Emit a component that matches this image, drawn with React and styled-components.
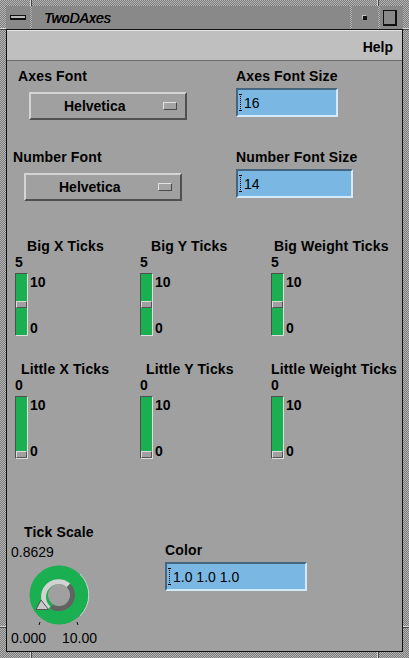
import React from 'react';
import styled, { createGlobalStyle } from 'styled-components';

const GlobalStyle = createGlobalStyle`
  html, body {
    margin: 0;
    padding: 0;
    background: #a0a0a0;
  }
  body {
    font-family: "Liberation Sans", Arial, Helvetica, sans-serif;
    color: #000;
  }
`;

const dither = 'repeating-conic-gradient(#7a7a7a 0% 25%, #b6b6b6 0% 50%) 0 0 / 2px 2px';

// resize-corner notches cut into the window frame
const notchV = (x, y) =>
    `linear-gradient(#d8d8d8, #d8d8d8) ${x}px ${y}px / 1px 6px no-repeat, linear-gradient(#444, #444) ${x + 1}px ${y}px / 1px 6px no-repeat`;
const notchH = (x, y) =>
    `linear-gradient(#d8d8d8, #d8d8d8) ${x}px ${y}px / 6px 1px no-repeat, linear-gradient(#444, #444) ${x}px ${y + 1}px / 6px 1px no-repeat`;

const Window = styled.div`
    width: 409px;
    height: 658px;
    box-sizing: border-box;
    padding: 6px;
    background:
        ${notchV(30, 0)},
        ${notchV(377, 0)},
        ${notchV(30, 652)},
        ${notchV(377, 652)},
        ${notchH(0, 28)},
        ${notchH(0, 626)},
        ${notchH(403, 28)},
        ${notchH(403, 626)},
        ${dither};
    display: flex;
    flex-direction: column;
`;

const TitleBar = styled.div`
    display: flex;
    gap: 2px;
    height: 23px;
    flex-shrink: 0;
`;

const TitleSegment = styled.div`
    width: ${(p) => (p.$w ? `${p.$w}px` : 'auto')};
    flex: ${(p) => (p.$w ? '0 0 auto' : '1')};
    background: #898989;
    display: flex;
    align-items: center;
    justify-content: ${(p) => p.$justify || 'center'};
    box-sizing: border-box;
`;

const MenuGlyph = styled.div`
    width: 16px;
    height: 5px;
    box-sizing: border-box;
    border: 1px solid #111;
    border-bottom-width: 2px;
    background: #b8b8b8;
`;

const MinGlyph = styled.div`
    width: 4px;
    height: 4px;
    background: #111;
    box-shadow: -1px -1px 0 #c0c0c0;
`;

const MaxGlyph = styled.div`
    width: 14px;
    height: 16px;
    box-sizing: border-box;
    border: 1px solid #111;
    border-right-width: 2px;
    border-bottom-width: 2px;
    margin-left: -3px;
`;

const WindowTitle = styled.span`
    font-style: italic;
    font-size: 14px;
    line-height: 16px;
    padding-left: 12px;
    margin-top: 1px;
    text-shadow: 0.3px 0 0 #000;
`;

const Client = styled.div`
    flex: 1;
    border: 1px solid #111;
    background: #a0a0a0;
    display: flex;
    flex-direction: column;
`;

const MenuBar = styled.div`
    height: 31px;
    box-sizing: border-box;
    flex-shrink: 0;
    background: #bfbfbf;
    border-top: 1px solid #e4e4e4;
    border-bottom: 1px solid #6c6c6c;
    display: flex;
    justify-content: flex-end;
    align-items: flex-start;
    padding: 8px 9px 0 0;
`;

const MenuItem = styled.span`
    font-weight: bold;
    font-size: 14px;
    line-height: 16px;
`;

const Content = styled.div`
    flex: 1;
    display: flex;
    flex-direction: column;
    padding-top: 7px;
`;

const FontGrid = styled.div`
    display: grid;
    grid-template-columns: 229px 1fr;
    row-gap: 29px;
`;

const Cell = styled.div`
    display: flex;
    flex-direction: column;
    align-items: flex-start;
    padding-left: ${(p) => p.$indent || 0}px;
`;

const Label = styled.div`
    font-weight: bold;
    font-size: 14px;
    line-height: 16px;
    letter-spacing: 0.15px;
    white-space: nowrap;
    margin-left: ${(p) => p.$indent || 0}px;
`;

const Plain = styled.div`
    font-size: 14px;
    line-height: 16px;
    white-space: nowrap;
    margin-left: ${(p) => p.$indent || 0}px;
    margin-top: ${(p) => p.$top || 0}px;
`;

const OptionMenu = styled.div`
    margin-top: 8px;
    margin-left: ${(p) => p.$indent || 0}px;
    width: 158px;
    height: 28px;
    box-sizing: border-box;
    border: 2px solid;
    border-color: #d4d4d4 #505050 #505050 #d4d4d4;
    background: #a0a0a0;
    display: flex;
    align-items: center;
    justify-content: space-between;
    padding: 0 8px 0 33px;
    font-weight: bold;
    font-size: 14px;
    line-height: 16px;
`;

const OptionIndicator = styled.div`
    width: 14px;
    height: 8px;
    box-sizing: border-box;
    border: 1px solid;
    border-color: #e2e2e2 #4a4a4a #4a4a4a #e2e2e2;
    background: #a4a4a4;
`;

const TextField = styled.div`
    margin-top: 4px;
    width: ${(p) => p.$w}px;
    height: 29px;
    box-sizing: border-box;
    border: 2px solid;
    border-color: #45667e #d2eafb #d2eafb #45667e;
    background: #7ab8e3;
    display: flex;
    align-items: center;
    padding-left: 1px;
    font-size: 14px;
    line-height: 16px;
`;

const Caret = styled.span`
    display: inline-block;
    width: 3px;
    height: 17px;
    margin-right: 2px;
    background:
        linear-gradient(#000, #000) 0 0 / 3px 1px no-repeat,
        linear-gradient(#000, #000) 0 100% / 3px 1px no-repeat,
        repeating-linear-gradient(#000 0 1px, transparent 1px 2px) 1px 0 / 1px 100% no-repeat;
`;

const SliderGrid = styled.div`
    margin-top: 37px;
    padding-left: 8px;
    display: grid;
    grid-template-columns: 125px 131px 1fr;
    row-gap: 25px;
`;

const SliderBlock = styled.div`
    display: flex;
    flex-direction: column;
    align-items: flex-start;
`;

const Value = styled.div`
    font-weight: bold;
    font-size: 14px;
    line-height: 16px;
`;

const SliderRow = styled.div`
    margin-top: 3px;
    display: flex;
    gap: 2px;
`;

const Trough = styled.div`
    position: relative;
    width: 13px;
    height: 63px;
    box-sizing: border-box;
    border: 1px solid;
    border-color: #4e4e4e #dedede #dedede #4e4e4e;
    background: #1aaf50;
`;

const Thumb = styled.div`
    position: absolute;
    left: 0;
    right: 0;
    height: 7px;
    box-sizing: border-box;
    border: 1px solid;
    border-color: #dcdcdc #555 #555 #dcdcdc;
    background: #a0a0a0;
`;

const Scale = styled.div`
    height: 63px;
    padding-top: 1px;
    box-sizing: border-box;
    display: flex;
    flex-direction: column;
    justify-content: space-between;
    font-weight: bold;
    font-size: 14px;
    line-height: 16px;
`;

const BottomRow = styled.div`
    margin-top: 65px;
    display: flex;
    align-items: flex-start;
`;

const DialBlock = styled.div`
    width: 154px;
    padding-left: 4px;
    display: flex;
    flex-direction: column;
    align-items: flex-start;
`;

const DialSvg = styled.svg`
    display: block;
    margin-top: 5px;
    margin-left: 18px;
`;

const RangeRow = styled.div`
    display: flex;
    gap: 16px;
    margin-top: 3px;
    font-size: 14px;
    line-height: 16px;
`;

const ColorBlock = styled.div`
    margin-top: 18px;
    display: flex;
    flex-direction: column;
    align-items: flex-start;
`;

const Slider = ({ label, indent, value }) => (
    <SliderBlock>
        <Label $indent={indent}>{label}</Label>
        <Value>{value}</Value>
        <SliderRow>
            <Trough>
                <Thumb style={{ top: `${(1 - value / 10) * 54}px` }} />
            </Trough>
            <Scale>
                <span>10</span>
                <span>0</span>
            </Scale>
        </SliderRow>
    </SliderBlock>
);

const Field = ({ width, children }) => (
    <TextField $w={width}>
        <Caret />
        {children}
    </TextField>
);

const Dial = () => (
    <DialSvg width="62" height="62" viewBox="0 0 62 62">
        <circle cx="30" cy="30" r="29.5" fill="#1aaf50" />
        <path d="M 51 51 A 29.5 29.5 0 0 0 51 9" fill="none" stroke="#c6d6cb" strokeWidth="1" />
        <path d="M 19.7 43.3 A 13.5 13.5 0 0 1 39.5 20.5" fill="none" stroke="#d2d2d2" strokeWidth="5" />
        <path d="M 39.5 20.5 A 13.5 13.5 0 0 1 22.5 41.3" fill="none" stroke="#626262" strokeWidth="5" />
        <circle cx="30" cy="30" r="11" fill="#a0a0a0" />
        <polygon points="12,35 7,44.5 19.5,44.5" fill="#c8c8c8" stroke="#555" strokeWidth="1" />
        <line x1="11" y1="57" x2="10" y2="60" stroke="#111" strokeWidth="1" />
        <line x1="48" y1="57" x2="49" y2="60" stroke="#111" strokeWidth="1" />
    </DialSvg>
);

const App = () => {
    return (
        <>
            <GlobalStyle />
            <Window>
                <TitleBar>
                    <TitleSegment $w={24}>
                        <MenuGlyph />
                    </TitleSegment>
                    <TitleSegment $justify="flex-start">
                        <WindowTitle>TwoDAxes</WindowTitle>
                    </TitleSegment>
                    <TitleSegment $w={26}>
                        <MinGlyph />
                    </TitleSegment>
                    <TitleSegment $w={23}>
                        <MaxGlyph />
                    </TitleSegment>
                </TitleBar>
                <Client>
                    <MenuBar>
                        <MenuItem>Help</MenuItem>
                    </MenuBar>
                    <Content>
                        <FontGrid>
                            <Cell $indent={11}>
                                <Label>Axes Font</Label>
                                <OptionMenu $indent={11}>
                                    <span>Helvetica</span>
                                    <OptionIndicator />
                                </OptionMenu>
                            </Cell>
                            <Cell>
                                <Label>Axes Font Size</Label>
                                <Field width={102}>16</Field>
                            </Cell>
                            <Cell $indent={6}>
                                <Label>Number Font</Label>
                                <OptionMenu $indent={11}>
                                    <span>Helvetica</span>
                                    <OptionIndicator />
                                </OptionMenu>
                            </Cell>
                            <Cell>
                                <Label>Number Font Size</Label>
                                <Field width={117}>14</Field>
                            </Cell>
                        </FontGrid>

                        <SliderGrid>
                            <Slider label="Big X Ticks" indent={12} value={5} />
                            <Slider label="Big Y Ticks" indent={11} value={5} />
                            <Slider label="Big Weight Ticks" indent={3} value={5} />
                            <Slider label="Little X Ticks" indent={6} value={0} />
                            <Slider label="Little Y Ticks" indent={6} value={0} />
                            <Slider label="Little Weight Ticks" indent={0} value={0} />
                        </SliderGrid>

                        <BottomRow>
                            <DialBlock>
                                <Label $indent={13}>Tick Scale</Label>
                                <Plain $top={4}>0.8629</Plain>
                                <Dial />
                                <RangeRow>
                                    <span>0.000</span>
                                    <span>10.00</span>
                                </RangeRow>
                            </DialBlock>
                            <ColorBlock>
                                <Label>Color</Label>
                                <Field width={142}>1.0 1.0 1.0</Field>
                            </ColorBlock>
                        </BottomRow>
                    </Content>
                </Client>
            </Window>
        </>
    );
};

export default App;
